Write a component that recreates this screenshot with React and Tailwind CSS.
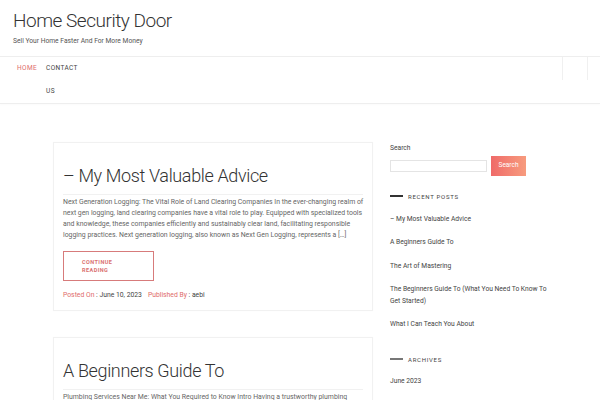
import React from "react";

const RECENT = [
  "– My Most Valuable Advice",
  "A Beginners Guide To",
  "The Art of Mastering",
  "The Beginners Guide To (What You Need To Know To Get Started)",
  "What I Can Teach You About",
];

function WidgetTitle({ children, lineClass }) {
  return (
    <div className="flex items-center gap-[5px]">
      <span className={`block h-[1.5px] w-[13px] ${lineClass}`} />
      <span className="text-[6px] leading-[11px] uppercase tracking-[0.12em] text-[#444]">{children}</span>
    </div>
  );
}

function PostCard({ title, excerpt, showMeta }) {
  return (
    <article className="border border-[#f1f1f1] pl-[9px] pr-[3px] pt-[20px] pb-[9px] shadow-[0_0_2px_rgba(0,0,0,0.02)]">
      <h2 className="text-[18px] leading-[26px] font-light tracking-[-0.02em] text-[#333]">{title}</h2>
      <div className="mt-[5px] mr-[6px] border-t border-[#f1f1f1]" />
      <p className="mt-[2px] text-[6.9px] leading-[11px] text-[#666]">{excerpt}</p>
      {showMeta && (
        <>
          <button type="button" className="mt-[10px] flex h-[30px] w-[91px] items-center border border-[#d77b7b] pl-[18px] text-left">
            <span className="block w-[40px] text-[5.5px] font-bold leading-[8px] tracking-[0.08em] text-[#d9706f]">CONTINUE READING</span>
          </button>
          <p className="mt-[9px] text-[6.8px] leading-[11px] text-[#444]">
            <span className="text-[#e06b6b]">Posted On</span> : June 10, 2023
            <span className="ml-[6px] text-[#e06b6b]">Published By</span> : aebi
          </p>
        </>
      )}
    </article>
  );
}

export default function App() {
  return (
    <div className="min-h-[400px] overflow-hidden bg-white font-['Roboto','Liberation_Sans',sans-serif]">
      <header className="h-[56px] px-[13px] pt-[8px]">
        <h1 className="text-[19px] leading-[26px] font-light tracking-[-0.025em] text-[#333]">Home Security Door</h1>
        <p className="mt-[2px] text-[6.7px] leading-[10px] text-[#555]">Sell Your Home Faster And For More Money</p>
      </header>

      <nav className="flex h-[48px] border-y border-[#eee] shadow-[0_1px_2px_rgba(0,0,0,0.02)]">
        <ul className="flex gap-[9px] pl-[17px] text-[6.5px] leading-[23px] tracking-[0.06em]">
          <li className="text-[#e06b6b]">HOME</li>
          <li className="w-[34px] text-[#444]">CONTACT US</li>
        </ul>
        <div className="ml-auto mr-[12px] h-[23px] w-[26px] border-x border-[#f0f0f0]" />
      </nav>

      <div className="mx-auto flex w-[494px] gap-[17px] pt-[38px]">
        <main className="flex w-[320px] shrink-0 flex-col gap-[26px]">
          <PostCard
            title="– My Most Valuable Advice"
            excerpt="Next Generation Logging: The Vital Role of Land Clearing Companies In the ever-changing realm of next gen logging, land clearing companies have a vital role to play. Equipped with specialized tools and knowledge, these companies efficiently and sustainably clear land, facilitating responsible logging practices. Next generation logging, also known as Next Gen Logging, represents a […]"
            showMeta
          />
          <PostCard
            title="A Beginners Guide To"
            excerpt="Plumbing Services Near Me: What You Required to Know Intro Having a trustworthy plumbing service is essential for every homeowner. Whether it is a leaking tap, a clogged drain or a burst pipe, you need someone who can fix the problem quickly and correctly."
          />
        </main>

        <aside className="flex-1 pt-[1px] text-[6.7px] text-[#444]">
          <p className="leading-[11px]">Search</p>
          <div className="mt-[1.5px] flex items-center gap-[4px]">
            <div className="h-[12px] w-[97px] border border-[#e4e4e4] bg-white" />
            <button type="button" className="h-[20px] w-[35px] bg-gradient-to-r from-[#ef6a69] to-[#f79b7e] text-[6.5px] text-white">Search</button>
          </div>

          <div className="mt-[15px]">
            <WidgetTitle lineClass="bg-[#333]">Recent Posts</WidgetTitle>
            <ul className="mt-[12px] flex flex-col gap-[12px]">
              {RECENT.map((item) => (
                <li key={item} className="leading-[11.5px]">{item}</li>
              ))}
            </ul>
          </div>

          <div className="mt-[23px]">
            <WidgetTitle lineClass="bg-[#777]">Archives</WidgetTitle>
            <ul className="mt-[11px]">
              <li className="leading-[11.5px]">June 2023</li>
            </ul>
          </div>
        </aside>
      </div>
    </div>
  );
}
